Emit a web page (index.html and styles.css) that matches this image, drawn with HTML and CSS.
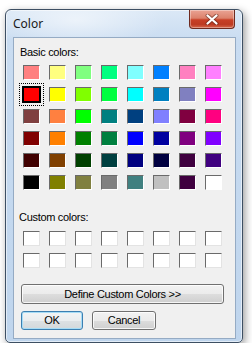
FILE: index.html
```html
<!DOCTYPE html>
<html>
<head>
<meta charset="utf-8">
<link rel="stylesheet" href="styles.css">
</head>
<body>
<div class="window">
  <div class="titlebar">
    <span class="title">Color</span>
    <span class="close"><svg width="14" height="11" viewBox="0 0 14 11"><path d="M2.5 1.5 L11.5 9.5 M11.5 1.5 L2.5 9.5" stroke="#5a2418" stroke-width="4" stroke-linecap="round" opacity="0.55"/><path d="M2.5 1.5 L11.5 9.5 M11.5 1.5 L2.5 9.5" stroke="#fff" stroke-width="2.2" stroke-linecap="round"/></svg></span>
  </div>
  <div class="client">
    <div class="label">Basic colors:</div>
    <div class="grid basic">
      <span class="sw" style="background:#ff8080"></span>
      <span class="sw" style="background:#ffff80"></span>
      <span class="sw" style="background:#80ff80"></span>
      <span class="sw" style="background:#00ff80"></span>
      <span class="sw" style="background:#80ffff"></span>
      <span class="sw" style="background:#0080ff"></span>
      <span class="sw" style="background:#ff80c0"></span>
      <span class="sw" style="background:#ff80ff"></span>

      <span class="sw selected" style="background:#ff0000"></span>
      <span class="sw" style="background:#ffff00"></span>
      <span class="sw" style="background:#80ff00"></span>
      <span class="sw" style="background:#00ff40"></span>
      <span class="sw" style="background:#00ffff"></span>
      <span class="sw" style="background:#0080c0"></span>
      <span class="sw" style="background:#8080c0"></span>
      <span class="sw" style="background:#ff00ff"></span>

      <span class="sw" style="background:#804040"></span>
      <span class="sw" style="background:#ff8040"></span>
      <span class="sw" style="background:#00ff00"></span>
      <span class="sw" style="background:#008080"></span>
      <span class="sw" style="background:#004080"></span>
      <span class="sw" style="background:#8080ff"></span>
      <span class="sw" style="background:#800040"></span>
      <span class="sw" style="background:#ff0080"></span>

      <span class="sw" style="background:#800000"></span>
      <span class="sw" style="background:#ff8000"></span>
      <span class="sw" style="background:#008000"></span>
      <span class="sw" style="background:#008040"></span>
      <span class="sw" style="background:#0000ff"></span>
      <span class="sw" style="background:#0000a0"></span>
      <span class="sw" style="background:#800080"></span>
      <span class="sw" style="background:#8000ff"></span>

      <span class="sw" style="background:#400000"></span>
      <span class="sw" style="background:#804000"></span>
      <span class="sw" style="background:#004000"></span>
      <span class="sw" style="background:#004040"></span>
      <span class="sw" style="background:#000080"></span>
      <span class="sw" style="background:#000040"></span>
      <span class="sw" style="background:#400040"></span>
      <span class="sw" style="background:#400080"></span>

      <span class="sw" style="background:#000000"></span>
      <span class="sw" style="background:#808000"></span>
      <span class="sw" style="background:#808040"></span>
      <span class="sw" style="background:#808080"></span>
      <span class="sw" style="background:#408080"></span>
      <span class="sw" style="background:#c0c0c0"></span>
      <span class="sw" style="background:#400040"></span>
      <span class="sw" style="background:#ffffff"></span>
    </div>
    <div class="label label-custom">Custom colors:</div>
    <div class="grid custom">
      <span class="sw empty"></span><span class="sw empty"></span><span class="sw empty"></span><span class="sw empty"></span>
      <span class="sw empty"></span><span class="sw empty"></span><span class="sw empty"></span><span class="sw empty"></span>
      <span class="sw empty"></span><span class="sw empty"></span><span class="sw empty"></span><span class="sw empty"></span>
      <span class="sw empty"></span><span class="sw empty"></span><span class="sw empty"></span><span class="sw empty"></span>
    </div>
    <div class="btn define">Define Custom Colors &gt;&gt;</div>
    <div class="actions">
      <div class="btn ok">OK</div>
      <div class="btn cancel">Cancel</div>
    </div>
  </div>
</div>
</body>
</html>
```

FILE: styles.css
```css
html, body {
  margin: 0;
  padding: 0;
  background: #ffffff;
}

body {
  padding: 9px 0 0 5px;
}

.window {
  box-sizing: border-box;
  width: 238px;
  height: 334px;
  border: 1px solid #3d4f63;
  border-radius: 6px 6px 5px 5px;
  padding: 0 6px 3px 7px;
  background:
    radial-gradient(ellipse 90px 30px at 70px 10px, rgba(255,255,255,0.55), rgba(255,255,255,0) 100%),
    linear-gradient(to bottom, #dbe8f6 0px, #c9dcf1 30px, #bfd5ed 100%);
  box-shadow: inset 0 0 0 1px rgba(255,255,255,0.55), 2px 3px 8px rgba(0,0,0,0.4);
}

.titlebar {
  display: flex;
  justify-content: space-between;
  align-items: flex-start;
  height: 27px;
}

.title {
  font-family: "Noto Sans", "Open Sans", sans-serif;
  font-size: 12px;
  line-height: 16px;
  color: #1a1a1a;
  padding-top: 6px;
}

.close {
  box-sizing: border-box;
  width: 46px;
  height: 19px;
  margin-right: 1px;
  display: flex;
  align-items: center;
  justify-content: center;
  border: 1px solid #6e2a1f;
  border-top: none;
  border-radius: 0 0 4px 4px;
  background: linear-gradient(to bottom, #eaa394 0%, #dc826c 45%, #c83f26 55%, #bd3a22 80%, #d6674b 100%);
  box-shadow: inset 0 0 0 1px rgba(255,255,255,0.35);
}

.client {
  box-sizing: border-box;
  height: 302px;
  border: 1px solid #95abc4;
  background: #f0f0f0;
  padding: 8px 0 0 0;
  font-family: "Liberation Sans", Arial, sans-serif;
  font-size: 11px;
  letter-spacing: -0.3px;
  color: #000;
}

.label {
  line-height: 13px;
  padding-left: 6px;
}

.label-custom {
  margin-top: 21px;
  padding-left: 5px;
}

.grid {
  display: grid;
  grid-template-columns: repeat(8, 17px);
  grid-auto-rows: 15px;
  column-gap: 9px;
  row-gap: 7px;
  margin-left: 9px;
}

.basic {
  margin-top: 6px;
}

.custom {
  margin-top: 7px;
}

.sw {
  box-sizing: border-box;
  display: block;
  border-top: 1px solid #6a6a6a;
  border-left: 1px solid #6a6a6a;
  border-right: 1px solid #ffffff;
  border-bottom: 1px solid #ffffff;
}

.sw.selected {
  border: 1px solid #000;
  box-shadow: 0 0 0 1px #000;
  outline: 1px dotted #000;
  outline-offset: 3px;
}

.sw.empty {
  background: #ffffff;
  border-right-color: #e3e3e3;
  border-bottom-color: #e3e3e3;
}

.btn {
  box-sizing: border-box;
  display: flex;
  align-items: center;
  justify-content: center;
  border: 1px solid #707070;
  border-radius: 3px;
  background: linear-gradient(to bottom, #f2f2f2 0%, #ebebeb 50%, #dddddd 51%, #cfcfcf 100%);
  box-shadow: inset 0 0 0 1px rgba(255,255,255,0.8);
  color: #000;
  line-height: 13px;
}

.define {
  margin: 16px 0 0 7px;
  width: 203px;
  height: 20px;
}

.actions {
  display: flex;
  gap: 9px;
  margin: 7px 0 0 7px;
}

.ok {
  width: 62px;
  height: 19px;
  border-color: #3c7fb1;
  box-shadow: inset 0 0 0 1px #a6dcf6;
  background: linear-gradient(to bottom, #f2f4f5 0%, #eaedef 50%, #dde1e4 51%, #d3d8db 100%);
}

.cancel {
  width: 64px;
  height: 19px;
}
```
